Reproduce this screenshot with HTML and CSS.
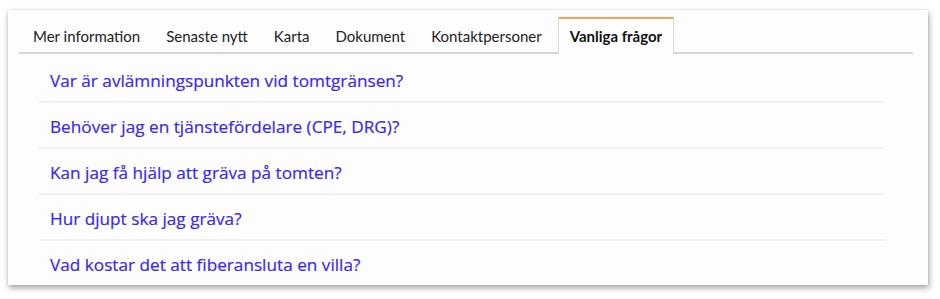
FILE: index.html
```html
<!DOCTYPE html>
<html lang="sv">
<head>
<meta charset="utf-8">
<link rel="stylesheet" href="styles.css">
</head>
<body>
<div class="window">
  <ul class="tabs">
    <li class="tab">Mer information</li>
    <li class="tab">Senaste nytt</li>
    <li class="tab">Karta</li>
    <li class="tab">Dokument</li>
    <li class="tab">Kontaktpersoner</li>
    <li class="tab active">Vanliga frågor</li>
  </ul>
  <ul class="faq">
    <li><a href="#">Var är avlämningspunkten vid tomtgränsen?</a></li>
    <li><a href="#">Behöver jag en tjänstefördelare (CPE, DRG)?</a></li>
    <li><a href="#">Kan jag få hjälp att gräva på tomten?</a></li>
    <li><a href="#">Hur djupt ska jag gräva?</a></li>
    <li><a href="#">Vad kostar det att fiberansluta en villa?</a></li>
  </ul>
</div>
</body>
</html>
```
FILE: styles.css
```css
html, body { margin: 0; padding: 0; background: #fff; }
body { padding: 10px 12px 14px 8px; font-family: Lato, "Open Sans", sans-serif; }
.window {
  width: 920px;
  height: 275px;
  box-sizing: border-box;
  background: #fdfdfd;
  box-shadow: 1px 3px 6px rgba(0,0,0,0.35), 0 0 2px rgba(0,0,0,0.12);
  padding: 7px 15px 0 11px;
}
.tabs {
  list-style: none;
  margin: 0;
  padding: 0;
  display: flex;
  border-bottom: 2px solid #d6d6d6;
  height: 35px;
  box-sizing: content-box;
}
.tab {
  font-size: 15px;
  color: #222;
  padding: 0 12px 0 14px;
  line-height: 38px;
  height: 35px;
  margin-bottom: -2px;
}
.tab.active {
  font-weight: bold;
  color: #111;
  border-top: 2px solid #f2a45e;
  border-left: 1px solid #dcdcdc;
  border-right: 1px solid #dcdcdc;
  background: #fff;
  line-height: 34px;
  height: 35px;
  padding: 0 11px;
  margin-left: 4px;
}
.faq {
  list-style: none;
  margin: 3px 29px 0 20px;
  padding: 0;
}
.faq li {
  height: 46px;
  line-height: 47px;
  border-bottom: 2px solid #f1f1f1;
  box-sizing: border-box;
  padding-left: 11px;
}
.faq li:last-child { border-bottom: none; }
.faq a {
  color: #3a28f0;
  font-family: "Open Sans", sans-serif;
  font-size: 17.2px;
  text-decoration: none;
  -webkit-text-stroke: 0.2px #3a28f0;
}
```
